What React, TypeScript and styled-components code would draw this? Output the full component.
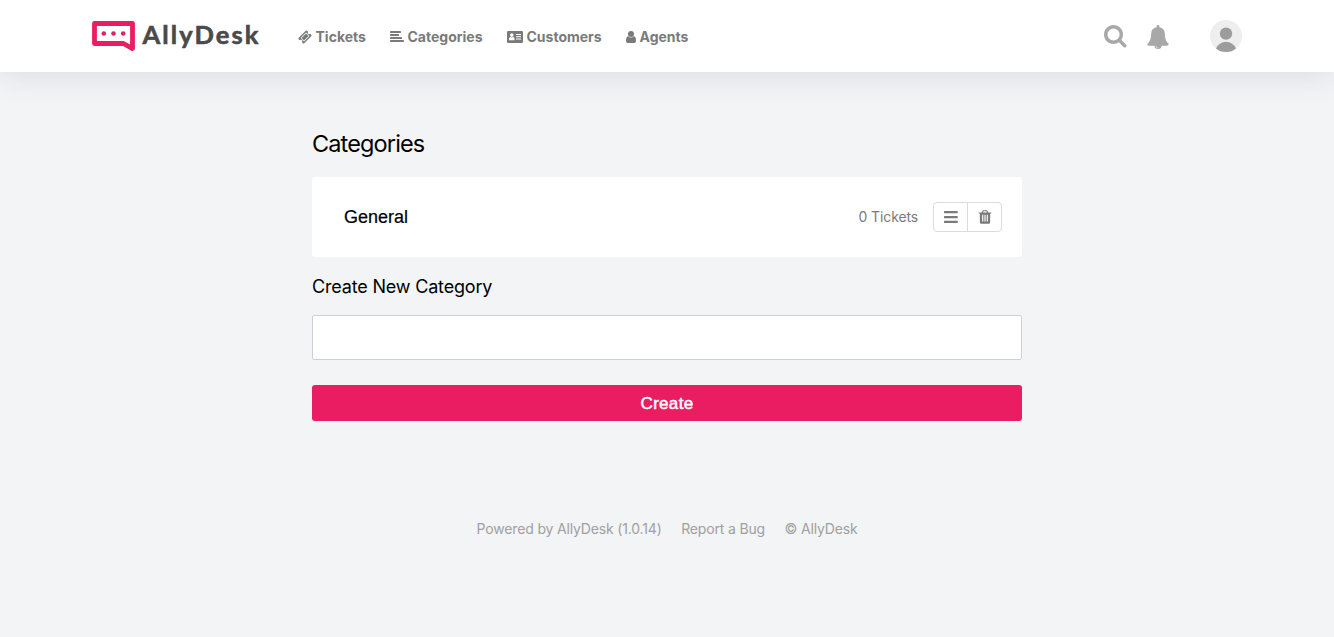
import React from 'react';
import styled, { createGlobalStyle } from 'styled-components';

const GlobalStyle = createGlobalStyle`
  * { box-sizing: border-box; }
  html, body { margin: 0; min-height: 100%; background: #f3f4f6; }
  body { font-family: Inter, "Liberation Sans", sans-serif; color: #000; }
  a { color: inherit; text-decoration: none; }
  h1, h2 { margin: 0; font-weight: 400; }
`;

const Header = styled.header`
  display: flex;
  align-items: center;
  height: 72px;
  padding: 0 92px;
  background: #fff;
  box-shadow: 0 4px 32px rgba(30, 35, 60, 0.11);
`;

const Brand = styled.a`
  display: flex;
  align-items: center;
  width: 206px;
  height: 72px;
`;

const BrandName = styled.span`
  margin: -4px 0 0 7.5px;
  font: 700 25.5px/30px Lato, sans-serif;
  letter-spacing: 2.1px;
  color: #4a4a4a;
  -webkit-text-stroke: 0.6px #4a4a4a;
`;

const Nav = styled.nav`
  display: flex;
  flex: 1;
  height: 20px;
  margin-top: 2px;
`;

const NavLink = styled.a<{ $width: number }>`
  display: flex;
  align-items: center;
  flex: none;
  width: ${(p) => p.$width}px;
  font-size: 14px;
  line-height: 20px;
  font-weight: 700;
  color: #7a7a7a;
  white-space: nowrap;
  svg { flex: none; margin-right: 3.5px; }
`;

const Tools = styled.div`
  display: flex;
  align-items: center;
  color: #a8a8a8;
  svg { display: block; }
`;

const ToolButton = styled.button<{ $gap: number }>`
  padding: 1px 0 0;
  border: 0;
  margin-right: ${(p) => p.$gap}px;
  background: none;
  color: inherit;
`;

const Main = styled.main`
  width: 710px;
  margin: 0 auto;
  padding-top: 56px;
`;

const PageTitle = styled.h1`
  font-size: 23.5px;
  line-height: 32px;
  letter-spacing: -0.87px;
`;

const CategoryCard = styled.section`
  display: flex;
  align-items: center;
  height: 80px;
  margin-top: 17px;
  padding: 0 20px 0 32px;
  border-radius: 3px;
  background: #fff;
`;

const CategoryName = styled.span`
  flex: 1;
  font: 400 18px/24px "Liberation Sans", sans-serif;
  -webkit-text-stroke: 0.2px #000;
`;

const TicketCount = styled.span`
  margin-right: 15px;
  font-size: 14px;
  line-height: 20px;
  letter-spacing: -0.13px;
  color: #7a7a7a;
`;

const ButtonGroup = styled.div`
  display: flex;
  width: 69px;
  height: 30px;
  border: 1px solid #dbdbdb;
  border-radius: 4px;
`;

const IconButton = styled.button`
  display: flex;
  flex: 1;
  align-items: center;
  justify-content: center;
  padding: 0;
  border: 0;
  background: none;
  color: #7a7a7a;
  & + & { border-left: 1px solid #dbdbdb; }
`;

const SectionTitle = styled.h2`
  margin-top: 17px;
  font-size: 18px;
  line-height: 26px;
  letter-spacing: -0.18px;
`;

const CategoryInput = styled.input`
  display: block;
  width: 100%;
  height: 45px;
  margin-top: 15px;
  padding: 0 12px;
  border: 1px solid #cdd0d5;
  border-radius: 2px;
  background: #fff;
  font-size: 16px;
`;

const CreateButton = styled.button`
  display: block;
  width: 100%;
  height: 36px;
  margin-top: 25px;
  padding: 1px 0 0;
  border: 0;
  border-radius: 3px;
  background: #ea1c62;
  color: #fff;
  font: 400 17px/35px "Liberation Sans", sans-serif;
  letter-spacing: 0.3px;
  -webkit-text-stroke: 0.5px #fff;
`;

const Footer = styled.footer`
  display: flex;
  justify-content: center;
  gap: 19.5px;
  padding-top: 98px;
  font-size: 14px;
  line-height: 20px;
  letter-spacing: -0.16px;
  color: #a0a0a0;
`;

const LogoMark = () => (
  <svg width="43" height="31" viewBox="0 0 43 31" fill="none">
    <path d="M2.5 2.5H40.5V27.6L31.5 22.5H2.5Z" stroke="#ea1c62" strokeWidth="4.8" strokeLinejoin="round" />
    <circle cx="11.8" cy="12.5" r="2.3" fill="#ea1c62" />
    <circle cx="21.5" cy="12.5" r="2.3" fill="#ea1c62" />
    <circle cx="31.2" cy="12.5" r="2.3" fill="#ea1c62" />
  </svg>
);

const TicketIcon = () => (
  <svg width="14" height="14" viewBox="0 0 1792 1792" fill="currentColor">
    <path d="M1024 452l316 316-572 572-316-316zm-211 979l618-618q19-19 19-45t-19-45l-362-362q-18-18-45-18t-45 18L361 979q-19 19-19 45t19 45l362 362q18 18 45 18t45-18zm889-637l-907 908q-37 37-90.5 37t-90.5-37l-126-126q56-56 56-136t-56-136-136-56-136 56l-125-126q-37-37-37-90.5t37-90.5L994 91q37-37 90.5-37t90.5 37l125 125q-56 56-56 136t56 136 136 56 136-56l126 125q37 37 37 90.5T1702 794z" />
  </svg>
);

const AlignIcon = () => (
  <svg width="14" height="14" viewBox="0 0 14 14" fill="currentColor">
    <rect y="1" width="11" height="2" rx=".4" />
    <rect y="4" width="9" height="2" rx=".4" />
    <rect y="7" width="12" height="2" rx=".4" />
    <rect y="10" width="14" height="2" rx=".4" />
  </svg>
);

const CardIcon = () => (
  <svg width="16" height="12" viewBox="0 0 16 12" fill="currentColor">
    <rect width="16" height="12" rx="1.2" />
    <circle cx="4.8" cy="4.1" r="1.8" fill="#fff" />
    <path d="M2 9.2Q1.9 6 3.6 6Q4.8 6.8 6 6Q7.7 6 7.6 9.2Z" fill="#fff" />
    <path d="M9 3.5h5M9 5.7h5M9 8h5" stroke="#fff" />
  </svg>
);

const UserIcon = () => (
  <svg width="10" height="12" viewBox="0 0 10 12" fill="currentColor">
    <circle cx="5" cy="3" r="3" />
    <path d="M2.3 5.3Q5 7.7 7.7 5.3Q10 5.5 10 9.8Q10 12 8.2 12H1.8Q0 12 0 9.8Q0 5.5 2.3 5.3Z" />
  </svg>
);

const SearchIcon = () => (
  <svg width="22.5" height="22.5" viewBox="64 128 1664 1664" fill="currentColor">
    <path d="M1216 832q0-185-131.5-316.5T768 384 451.5 515.5 320 832t131.5 316.5T768 1280t316.5-131.5T1216 832zm512 832q0 52-38 90t-90 38q-54 0-90-38l-343-342q-179 124-399 124-143 0-273.5-55.5t-225-150-150-225T64 832t55.5-273.5 150-225 225-150T768 128t273.5 55.5 225 150 150 225T1472 832q0 220-124 399l343 343q37 37 37 90z" />
  </svg>
);

const BellIcon = () => (
  <svg width="22" height="24" viewBox="0 0 22 24.5" fill="currentColor">
    <path d="M11 0q1.5 0 1.5 1.5v.8q5.5 1 5.5 6.9 0 7 4 10.2 0 1.8-1.9 1.8h-5.5q0 3.3-3.6 3.3t-3.6-3.3H1.9Q0 21.2 0 19.4q4-3.2 4-10.2 0-5.9 5.5-6.9v-.8Q9.5 0 11 0Z" />
    <path d="M8.8 21.2q0 2.2 2.2 2.2" fill="none" stroke="#fff" strokeWidth=".5" />
  </svg>
);

const Avatar = () => (
  <svg width="32" height="32" viewBox="0 0 32 32">
    <circle cx="16" cy="16" r="16" fill="#eee" />
    <circle cx="16" cy="13.6" r="6.2" fill="#9c9c9c" />
    <path d="M6 28.5Q9.5 21.8 16 21.8T26 28.5Q22 32 16 32T6 28.5Z" fill="#9c9c9c" />
  </svg>
);

const BarsIcon = () => (
  <svg width="14" height="12" viewBox="0 0 14 12" fill="currentColor">
    <rect width="13.7" height="2.3" rx=".5" />
    <rect y="4.9" width="13.7" height="2.3" rx=".5" />
    <rect y="9.7" width="13.7" height="2.3" rx=".5" />
  </svg>
);

const TrashIcon = () => (
  <svg width="16" height="16" viewBox="0 0 1792 1792" fill="currentColor">
    <path d="M704 1376V672q0-14-9-23t-23-9h-64q-14 0-23 9t-9 23v704q0 14 9 23t23 9h64q14 0 23-9t9-23zm256 0V672q0-14-9-23t-23-9h-64q-14 0-23 9t-9 23v704q0 14 9 23t23 9h64q14 0 23-9t9-23zm256 0V672q0-14-9-23t-23-9h-64q-14 0-23 9t-9 23v704q0 14 9 23t23 9h64q14 0 23-9t9-23zM672 384h448l-48-117q-7-9-17-11H738q-10 2-17 11zm928 32v64q0 14-9 23t-23 9h-96v948q0 83-47 143.5t-113 60.5H480q-66 0-113-58.5T320 1464V512h-96q-14 0-23-9t-9-23v-64q0-14 9-23t23-9h309l70-167q15-37 54-63t79-26h320q40 0 79 26t54 63l70 167h309q14 0 23 9t9 23z" />
  </svg>
);

export default function App() {
  return (
    <>
      <GlobalStyle />
      <Header>
        <Brand href="#"><LogoMark /><BrandName>AllyDesk</BrandName></Brand>
        <Nav>
          <NavLink href="#" $width={92}><TicketIcon />Tickets</NavLink>
          <NavLink href="#" $width={117}><AlignIcon />Categories</NavLink>
          <NavLink href="#" $width={119}><CardIcon />Customers</NavLink>
          <NavLink href="#" $width={70}><UserIcon />Agents</NavLink>
        </Nav>
        <Tools>
          <ToolButton $gap={20.5} aria-label="Search"><SearchIcon /></ToolButton>
          <ToolButton $gap={41} aria-label="Notifications"><BellIcon /></ToolButton>
          <Avatar />
        </Tools>
      </Header>
      <Main>
        <PageTitle>Categories</PageTitle>
        <CategoryCard>
          <CategoryName>General</CategoryName>
          <TicketCount>0 Tickets</TicketCount>
          <ButtonGroup>
            <IconButton aria-label="Reorder"><BarsIcon /></IconButton>
            <IconButton aria-label="Delete"><TrashIcon /></IconButton>
          </ButtonGroup>
        </CategoryCard>
        <SectionTitle>Create New Category</SectionTitle>
        <CategoryInput aria-label="Category name" />
        <CreateButton>Create</CreateButton>
      </Main>
      <Footer>
        <span>Powered by AllyDesk (1.0.14)</span>
        <a href="#">Report a Bug</a>
        <span>© AllyDesk</span>
      </Footer>
    </>
  );
}
